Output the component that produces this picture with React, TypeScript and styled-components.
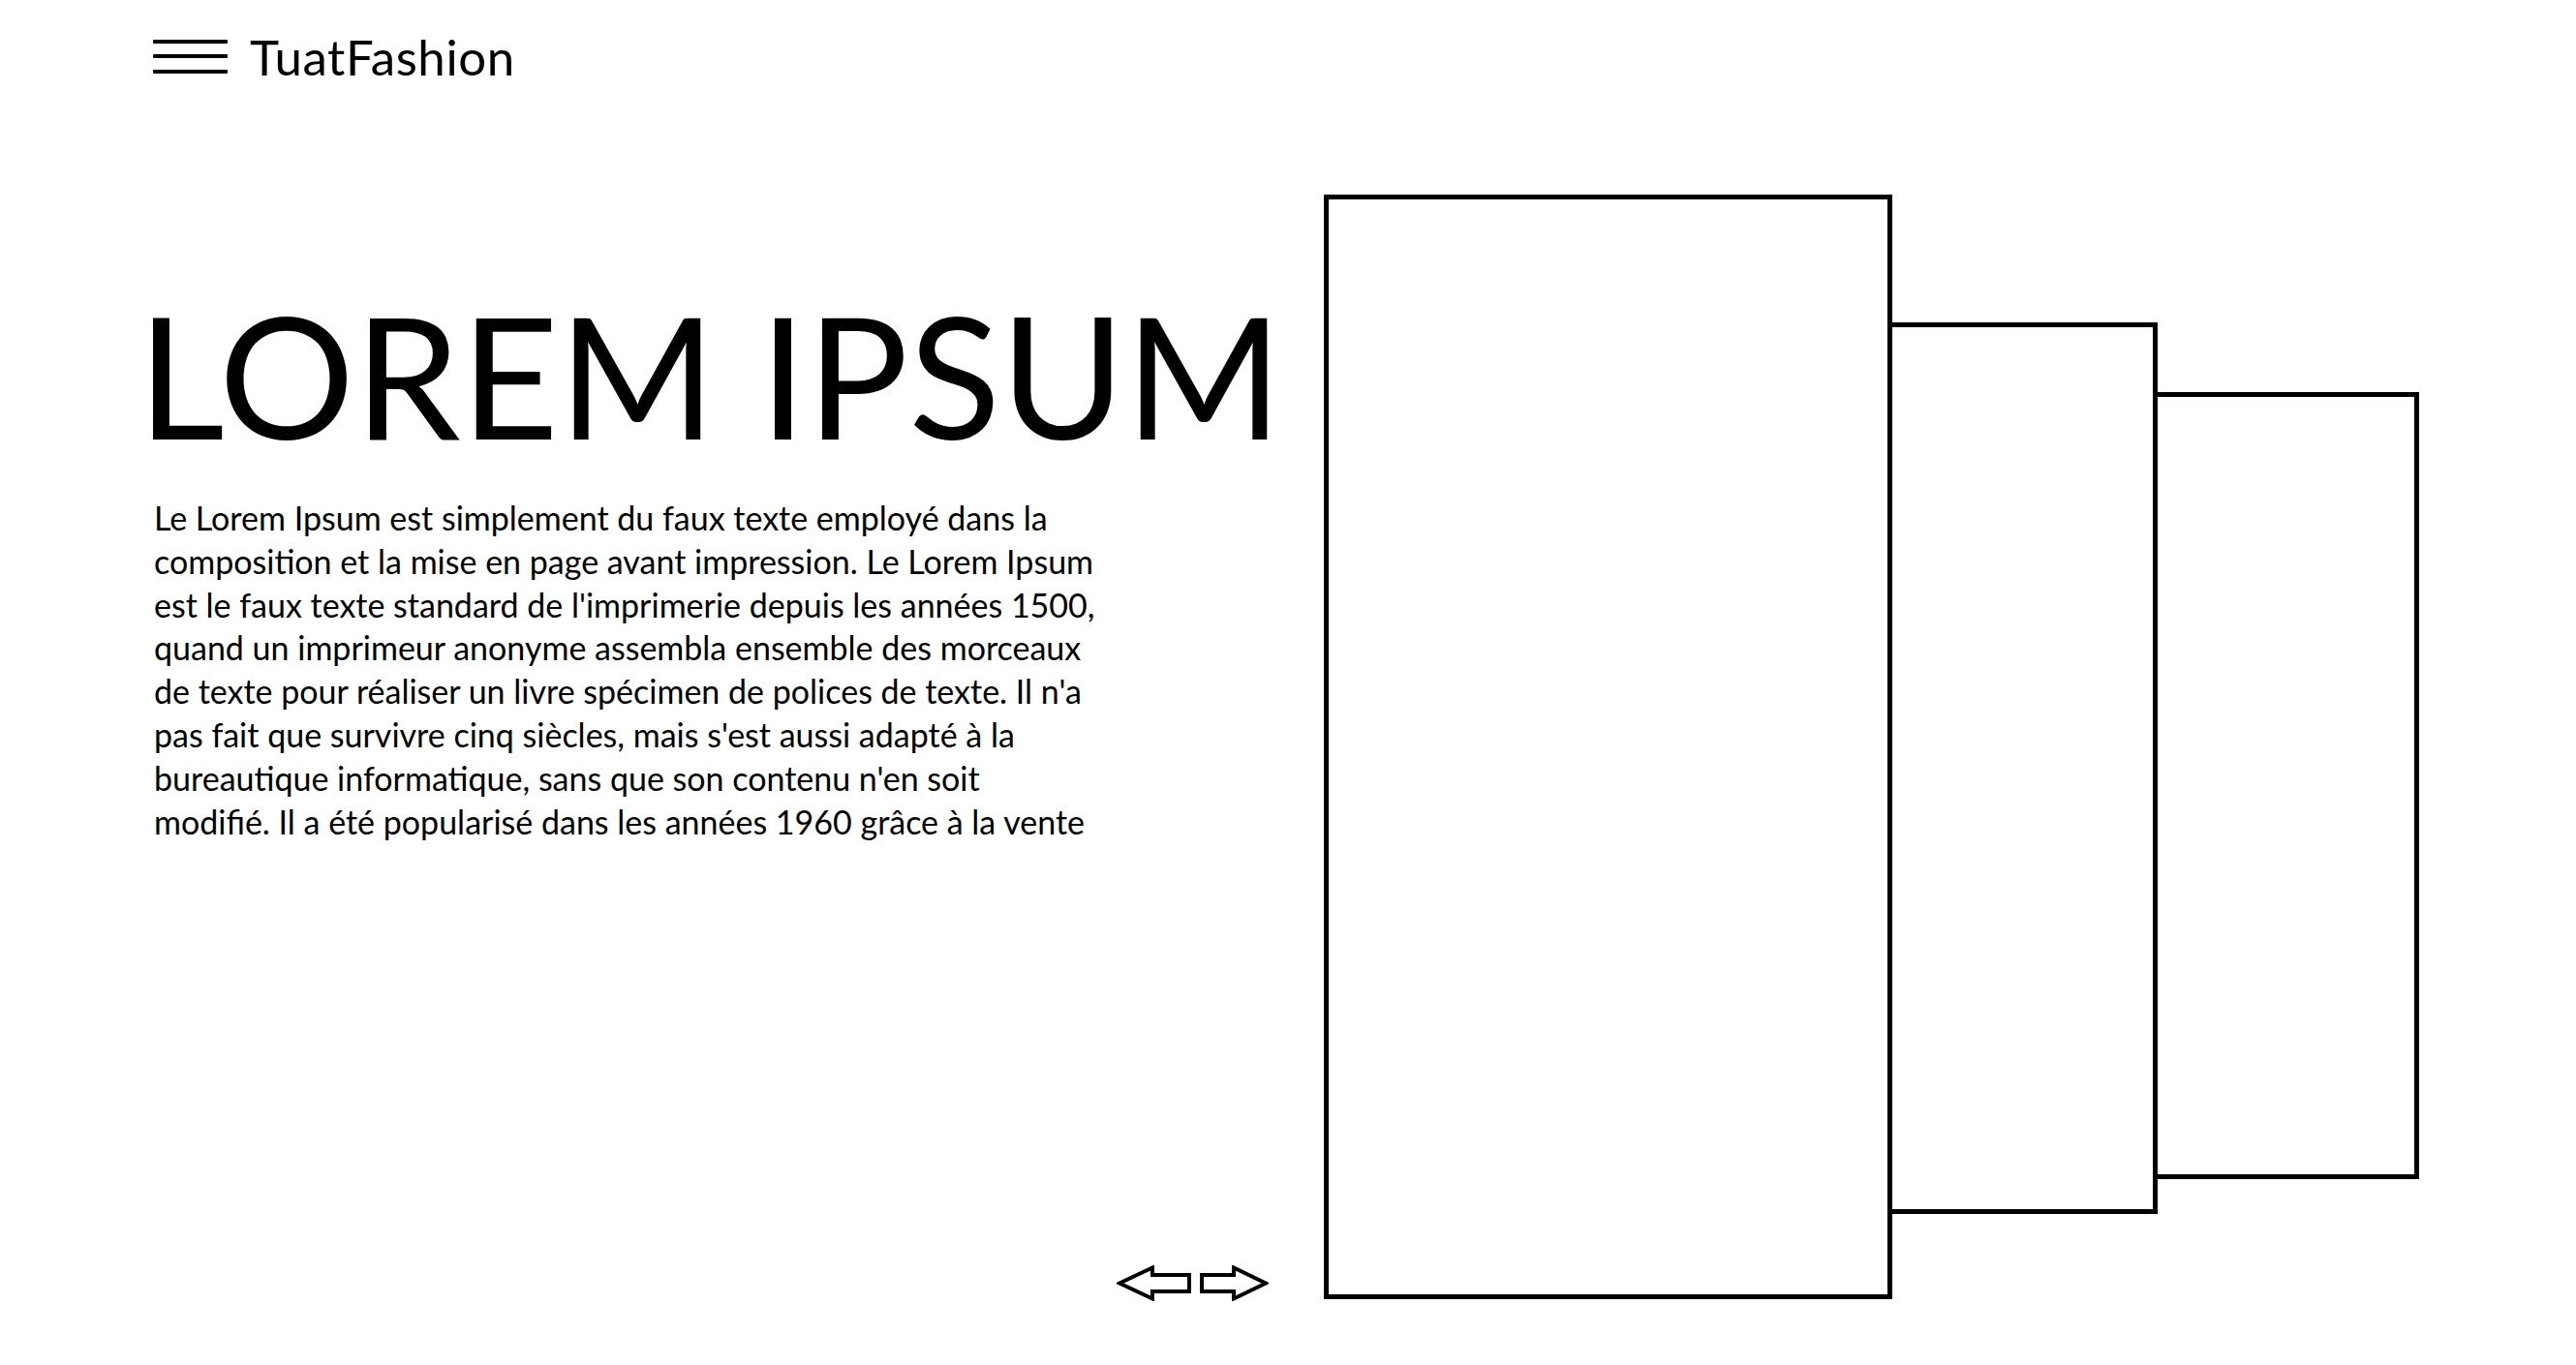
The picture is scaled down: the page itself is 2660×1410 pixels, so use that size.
import React from "react";
import styled, { createGlobalStyle } from "styled-components";

const Global = createGlobalStyle`
  html, body { margin: 0; padding: 0; background: #ffffff; }
  body { font-family: Lato, "Open Sans", sans-serif; color: #000; }
  * { box-sizing: border-box; }
`;

const Page = styled.div`
  width: 2660px;
  height: 1410px;
  display: flex;
  flex-direction: column;
  overflow: hidden;
`;

const Header = styled.header`
  height: 116px;
  display: flex;
  align-items: center;
  gap: 23px;
  padding-left: 158px;
`;

const Burger = styled.button`
  width: 77px;
  height: 35px;
  padding: 0;
  border: 0;
  background: transparent;
  display: flex;
  flex-direction: column;
  justify-content: space-between;
  cursor: pointer;
`;

const BurgerBar = styled.span`
  display: block;
  height: 4px;
  width: 100%;
  background: #000;
  border-radius: 1px;
`;

const Brand = styled.div`
  font-family: Lato, sans-serif;
  font-size: 51px;
  line-height: 51px;
  letter-spacing: 0.6px;
  font-weight: 400;
`;

const Main = styled.main`
  display: flex;
  gap: 56px;
  padding-left: 159px;
`;

const Intro = styled.section`
  width: 1152px;
  display: flex;
  flex-direction: column;
  padding-top: 183px;
`;

const Title = styled.h1`
  margin: 0 0 0 -17px;
  font-family: Lato, sans-serif;
  font-weight: 400;
  font-size: 175px;
  line-height: 175px;
  white-space: nowrap;
`;

const Lead = styled.p`
  margin: 39px 0 0 0;
  width: 976px;
  font-family: Lato, sans-serif;
  font-size: 34px;
  line-height: 44.8px;
`;

const Arrows = styled.div`
  margin-top: auto;
  align-self: flex-end;
  display: flex;
  gap: 9px;
  margin-right: 1px;
  margin-bottom: -2px;
`;

const ArrowButton = styled.button`
  padding: 0;
  border: 0;
  background: transparent;
  display: block;
  line-height: 0;
  cursor: pointer;

  svg {
    display: block;
  }
`;

const Gallery = styled.section`
  display: flex;
  align-items: flex-start;
  padding-top: 85px;
`;

const Frame = styled.div<{ $w: number; $h: number; $top: number; $overlap?: boolean }>`
  width: ${(p) => p.$w}px;
  height: ${(p) => p.$h}px;
  margin-top: ${(p) => p.$top}px;
  margin-left: ${(p) => (p.$overlap ? -5 : 0)}px;
  border: 5px solid #000;
  background: #fff;
  flex: none;
`;

const LeftArrow = () => (
  <svg width="77" height="37" viewBox="0 0 77 37">
    <path
      d="M3 18.5 L37 2.5 L37 10 L75 10 L75 27 L37 27 L37 34.5 Z"
      fill="none"
      stroke="#000"
      strokeWidth="4"
      strokeLinejoin="miter"
    />
  </svg>
);

const RightArrow = () => (
  <svg width="71" height="37" viewBox="0 0 71 37">
    <path
      d="M2 10 L35 10 L35 2.5 L68 18.5 L35 34.5 L35 27 L2 27 Z"
      fill="none"
      stroke="#000"
      strokeWidth="4"
      strokeLinejoin="miter"
    />
  </svg>
);

export default function App() {
  return (
    <Page>
      <Global />
      <Header>
        <Burger aria-label="Menu">
          <BurgerBar />
          <BurgerBar />
          <BurgerBar />
        </Burger>
        <Brand>TuatFashion</Brand>
      </Header>
      <Main>
        <Intro>
          <Title>LOREM IPSUM</Title>
          <Lead>
            Le Lorem Ipsum est simplement du faux texte employé dans la composition et la mise en page avant
            impression. Le Lorem Ipsum est le faux texte standard de l'imprimerie depuis les années 1500, quand un
            imprimeur anonyme assembla ensemble des morceaux de texte pour réaliser un livre spécimen de polices de
            texte. Il n'a pas fait que survivre cinq siècles, mais s'est aussi adapté à la bureautique informatique,
            sans que son contenu n'en soit modifié. Il a été popularisé dans les années 1960 grâce à la vente
          </Lead>
          <Arrows>
            <ArrowButton aria-label="Précédent">
              <LeftArrow />
            </ArrowButton>
            <ArrowButton aria-label="Suivant">
              <RightArrow />
            </ArrowButton>
          </Arrows>
        </Intro>
        <Gallery>
          <Frame $w={587} $h={1141} $top={0} />
          <Frame $w={279} $h={921} $top={132} $overlap />
          <Frame $w={275} $h={813} $top={204} $overlap />
        </Gallery>
      </Main>
    </Page>
  );
}
